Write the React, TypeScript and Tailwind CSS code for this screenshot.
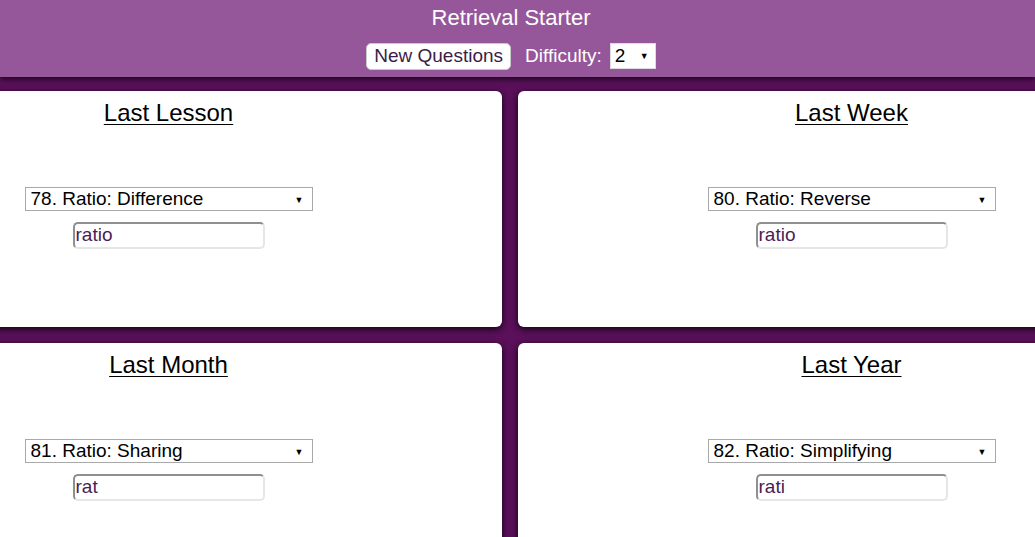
import { useState } from 'react'

interface Slot {
  title: string
  topic: string
  answer: string
}

const slots: Slot[] = [
  { title: 'Last Lesson', topic: '78. Ratio: Difference', answer: 'ratio' },
  { title: 'Last Week', topic: '80. Ratio: Reverse', answer: 'ratio' },
  { title: 'Last Month', topic: '81. Ratio: Sharing', answer: 'rat' },
  { title: 'Last Year', topic: '82. Ratio: Simplifying', answer: 'rati' },
]

const topics = [
  '78. Ratio: Difference',
  '79. Ratio: Proportion',
  '80. Ratio: Reverse',
  '81. Ratio: Sharing',
  '82. Ratio: Simplifying',
]

function Arrow() {
  return (
    <span className="pointer-events-none absolute right-[9px] top-1/2 -translate-y-1/2 text-[9px] leading-none text-black">
      ▼
    </span>
  )
}

function StarterCard({ slot }: { slot: Slot }) {
  const [topic, setTopic] = useState(slot.topic)
  const [answer, setAnswer] = useState(slot.answer)

  return (
    <div className="flex h-[236px] flex-col items-center rounded-[6px] bg-white pt-[8px] shadow-[0_2px_7px_rgba(0,0,0,0.85)]">
      <h2 className="h-[28px] text-[24px] leading-[28px] text-black underline decoration-1 underline-offset-[3px]">
        {slot.title}
      </h2>
      <div className="relative mt-[60px] w-[288px]">
        <select
          value={topic}
          onChange={(e) => setTopic(e.target.value)}
          className="h-[24px] w-full appearance-none border border-[#a9a9a9] bg-white pl-[5px] text-[19px] leading-[22px] text-black outline-none"
        >
          {topics.map((t) => (
            <option key={t}>{t}</option>
          ))}
        </select>
        <Arrow />
      </div>
      <input
        value={answer}
        onChange={(e) => setAnswer(e.target.value)}
        className="mt-[10px] h-[27px] w-[192px] rounded-[5px] border-2 border-t-[#8f8f8f] border-l-[#8f8f8f] border-r-[#e6e6e6] border-b-[#e6e6e6] bg-white pl-[1px] text-[19px] text-[#4b1d56] outline-none"
      />
    </div>
  )
}

export default function App() {
  const [difficulty, setDifficulty] = useState('2')

  return (
    <div className="min-h-[537px] overflow-hidden bg-[#5a105a] font-['Liberation_Sans',Arial,sans-serif]">
      <header className="relative z-10 flex h-[77px] flex-col items-center bg-[#96569a] pr-[13px] pt-[4px] shadow-[0_2px_6px_rgba(0,0,0,0.75)]">
        <h1 className="text-[22px] leading-[28px] text-white">Retrieval Starter</h1>
        <div className="mt-[10px] flex items-center">
          <button
            type="button"
            className="h-[27px] rounded-[5px] border border-[#c9c9c9] bg-white px-[7px] text-[19px] leading-[24px] text-[#3b1d48]"
          >
            New Questions
          </button>
          <span className="ml-[14px] text-[19px] text-white">Difficulty:</span>
          <div className="relative ml-[8px] w-[46px]">
            <select
              value={difficulty}
              onChange={(e) => setDifficulty(e.target.value)}
              className="h-[26px] w-full appearance-none border border-[#dcdcdc] bg-white pl-[4px] text-[19px] leading-[22px] text-black outline-none"
            >
              {['1', '2', '3', '4', '5'].map((d) => (
                <option key={d}>{d}</option>
              ))}
            </select>
            <span className="pointer-events-none absolute right-[7px] top-1/2 -translate-y-1/2 text-[9px] leading-none text-black">
              ▼
            </span>
          </div>
        </div>
      </header>
      <main className="ml-[-165px] grid w-[1350px] grid-cols-2 gap-4 pt-[14px]">
        {slots.map((slot) => (
          <StarterCard key={slot.title} slot={slot} />
        ))}
      </main>
    </div>
  )
}
